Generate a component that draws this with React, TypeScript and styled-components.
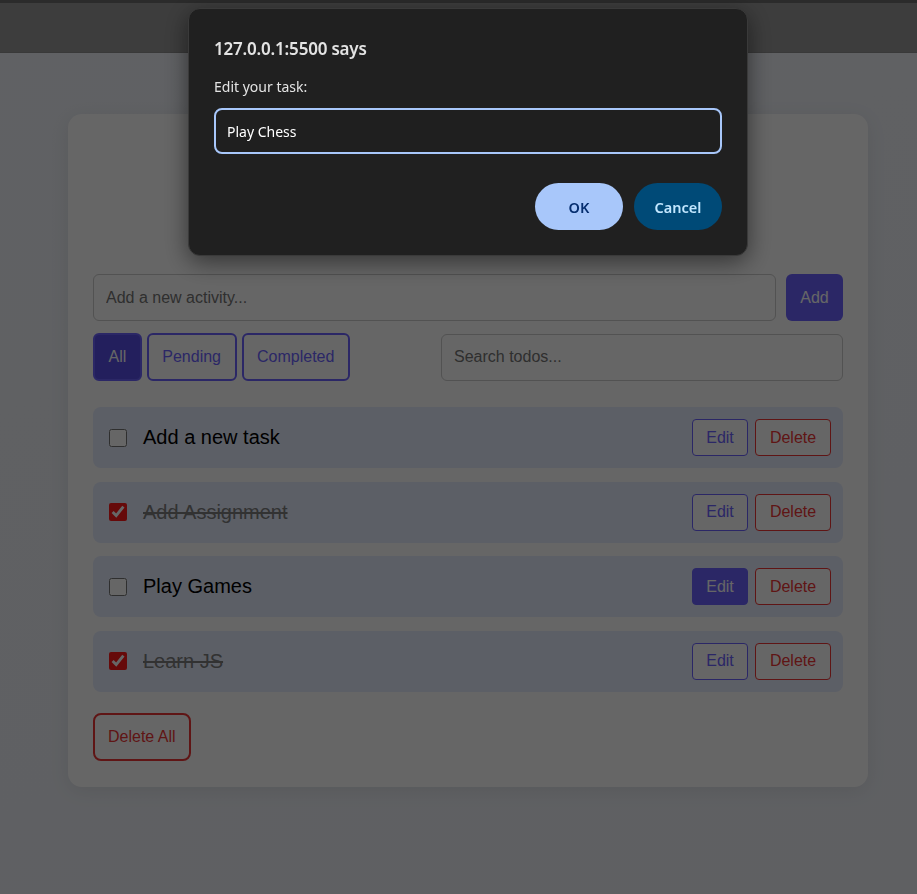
import React, { useState } from 'react';
import styled, { createGlobalStyle } from 'styled-components';

type Todo = {
  id: number;
  text: string;
  done: boolean;
  hovered?: boolean;
};

const initialTodos: Todo[] = [
  { id: 1, text: 'Add a new task', done: false },
  { id: 2, text: 'Add Assignment', done: true },
  { id: 3, text: 'Play Games', done: false, hovered: true },
  { id: 4, text: 'Learn JS', done: true },
];

const filters = ['All', 'Pending', 'Completed'];

const GlobalStyle = createGlobalStyle`
  html, body {
    margin: 0;
    padding: 0;
  }
  body {
    background: #eff2f9;
    font-family: "Liberation Sans", Arial, sans-serif;
    min-height: 894px;
  }
`;

export default function App() {
  const [todos, setTodos] = useState(initialTodos);
  const [filter, setFilter] = useState('All');
  const [draft, setDraft] = useState('Play Chess');

  const toggle = (id: number) => {
    setTodos((list) =>
      list.map((t) => (t.id === id ? { ...t, done: !t.done } : t))
    );
  };

  return (
    <>
      <GlobalStyle />
      <Page>
        <TopBar />
        <Card>
          <Title>To-Do List</Title>

          <AddRow>
            <TextInput placeholder="Add a new activity..." />
            <AddButton>Add</AddButton>
          </AddRow>

          <FilterRow>
            <FilterGroup>
              {filters.map((f) => (
                <FilterButton
                  key={f}
                  $active={filter === f}
                  onClick={() => setFilter(f)}
                >
                  {f}
                </FilterButton>
              ))}
            </FilterGroup>
            <SearchInput placeholder="Search todos..." />
          </FilterRow>

          <TodoList>
            {todos.map((todo) => (
              <TodoRow key={todo.id}>
                <Check
                  type="checkbox"
                  checked={todo.done}
                  onChange={() => toggle(todo.id)}
                />
                <TodoText $done={todo.done}>{todo.text}</TodoText>
                <Actions>
                  <EditButton $hovered={todo.hovered}>Edit</EditButton>
                  <DeleteButton>Delete</DeleteButton>
                </Actions>
              </TodoRow>
            ))}
          </TodoList>

          <DeleteAllButton>Delete All</DeleteAllButton>
        </Card>
      </Page>

      <Backdrop />

      <Dialog role="dialog">
        <DialogTitle>127.0.0.1:5500 says</DialogTitle>
        <DialogMessage>Edit your task:</DialogMessage>
        <DialogInput value={draft} onChange={(e) => setDraft(e.target.value)} />
        <DialogActions>
          <PillButton $primary>OK</PillButton>
          <PillButton>Cancel</PillButton>
        </DialogActions>
      </Dialog>
    </>
  );
}

const Page = styled.div`
  display: flex;
  flex-direction: column;
  min-height: 894px;
  background: linear-gradient(160deg, #f0f3f9 0%, #edf0f6 100%);
`;

const TopBar = styled.header`
  height: 49px;
  background: #999999;
  border-top: 3px solid #6b6b6b;
  border-bottom: 1px solid #8e8e8e;
`;

const Card = styled.main`
  width: 800px;
  box-sizing: border-box;
  margin: 61px 0 0 68px;
  padding: 25px 25px 26px;
  background: #ffffff;
  border-radius: 14px;
  box-shadow: 0 4px 20px rgba(0, 0, 0, 0.08);
`;

const Title = styled.h1`
  margin: 40px 0 55px;
  height: 40px;
  font-size: 32px;
  line-height: 40px;
  text-align: center;
  color: #333;
`;

const AddRow = styled.div`
  display: flex;
  gap: 10px;
`;

const TextInput = styled.input`
  flex: 1;
  height: 47px;
  box-sizing: border-box;
  padding: 0 12px;
  border: 1px solid #cccccc;
  border-radius: 6px;
  font: 16px "Liberation Sans", Arial, sans-serif;
  color: #222;
  outline: none;
  &::placeholder {
    color: #757575;
  }
`;

const AddButton = styled.button`
  width: 57px;
  height: 47px;
  padding: 0;
  border: none;
  border-radius: 6px;
  background: #6c63ff;
  color: #ffffff;
  font: 16px "Liberation Sans", Arial, sans-serif;
  cursor: pointer;
`;

const FilterRow = styled.div`
  display: flex;
  justify-content: space-between;
  align-items: center;
  margin-top: 12px;
`;

const FilterGroup = styled.div`
  display: flex;
  gap: 5px;
`;

const FilterButton = styled.button<{ $active?: boolean }>`
  height: 48px;
  padding: 0 13.5px;
  border: 2px solid #6c63ff;
  border-radius: 6px;
  background: ${(p) => (p.$active ? '#584fe8' : '#ffffff')};
  color: ${(p) => (p.$active ? '#ffffff' : '#6c63ff')};
  font: 16px "Liberation Sans", Arial, sans-serif;
  cursor: pointer;
`;

const SearchInput = styled(TextInput)`
  flex: none;
  width: 402px;
`;

const TodoList = styled.ul`
  list-style: none;
  margin: 26px 0 0;
  padding: 0;
  display: flex;
  flex-direction: column;
  gap: 13.67px;
`;

const TodoRow = styled.li`
  display: flex;
  align-items: center;
  height: 61px;
  padding: 0 12px 0 16px;
  background: #e6edff;
  border-radius: 8px;
`;

const Check = styled.input`
  width: 18px;
  height: 18px;
  margin: 0 16px 0 0;
  accent-color: #ff1a1a;
`;

const TodoText = styled.span<{ $done?: boolean }>`
  flex: 1;
  font-size: 20px;
  color: ${(p) => (p.$done ? '#7d7d7d' : '#000000')};
  text-decoration: ${(p) => (p.$done ? 'line-through' : 'none')};
`;

const Actions = styled.div`
  display: flex;
  gap: 7px;
`;

const SmallButton = styled.button`
  height: 37px;
  padding: 0 13px;
  border-radius: 4px;
  background: #ffffff;
  font: 16px "Liberation Sans", Arial, sans-serif;
  cursor: pointer;
`;

const EditButton = styled(SmallButton)<{ $hovered?: boolean }>`
  width: 56px;
  padding: 0;
  border: 1px solid #6c63ff;
  color: ${(p) => (p.$hovered ? '#ffffff' : '#6c63ff')};
  background: ${(p) => (p.$hovered ? '#6c63ff' : '#ffffff')};
`;

const DeleteButton = styled(SmallButton)`
  width: 76px;
  padding: 0;
  border: 1px solid #ee3535;
  color: #ee3535;
`;

const DeleteAllButton = styled.button`
  margin-top: 21px;
  height: 48px;
  padding: 0 13px;
  border: 2px solid #ee3535;
  border-radius: 8px;
  background: #ffffff;
  color: #ee3535;
  font: 16px "Liberation Sans", Arial, sans-serif;
  cursor: pointer;
`;

const Backdrop = styled.div`
  position: fixed;
  inset: 0;
  background: rgba(0, 0, 0, 0.6);
`;

const Dialog = styled.div`
  position: fixed;
  top: 8px;
  left: 188px;
  width: 560px;
  box-sizing: border-box;
  padding: 24px 25px 25px;
  background: #202020;
  border: 1px solid #3a3a3a;
  border-radius: 12px;
  box-shadow: 0 6px 24px rgba(0, 0, 0, 0.5);
  font-family: "Noto Sans", "Open Sans", sans-serif;
  color: #e3e3e3;
`;

const DialogTitle = styled.h2`
  margin: 0;
  font-size: 17px;
  line-height: 32px;
  font-weight: 600;
  letter-spacing: -0.2px;
`;

const DialogMessage = styled.p`
  margin: 12px 0 0;
  font-size: 14px;
  line-height: 20px;
`;

const DialogInput = styled.input`
  display: block;
  width: 100%;
  box-sizing: border-box;
  height: 46px;
  margin-top: 11px;
  padding: 0 11px;
  background: #1f1f1f;
  border: 2px solid #a8c7fa;
  border-radius: 8px;
  color: #ffffff;
  font: 14px "Noto Sans", "Open Sans", sans-serif;
  outline: none;
`;

const DialogActions = styled.div`
  display: flex;
  justify-content: flex-end;
  gap: 11px;
  margin-top: 29px;
`;

const PillButton = styled.button<{ $primary?: boolean }>`
  width: 88px;
  height: 47px;
  border: none;
  border-radius: 24px;
  background: ${(p) => (p.$primary ? '#a8c7fa' : '#004a77')};
  color: ${(p) => (p.$primary ? '#062e6f' : '#c2e7ff')};
  font: 600 14.5px "Noto Sans", "Open Sans", sans-serif;
  cursor: pointer;
`;
